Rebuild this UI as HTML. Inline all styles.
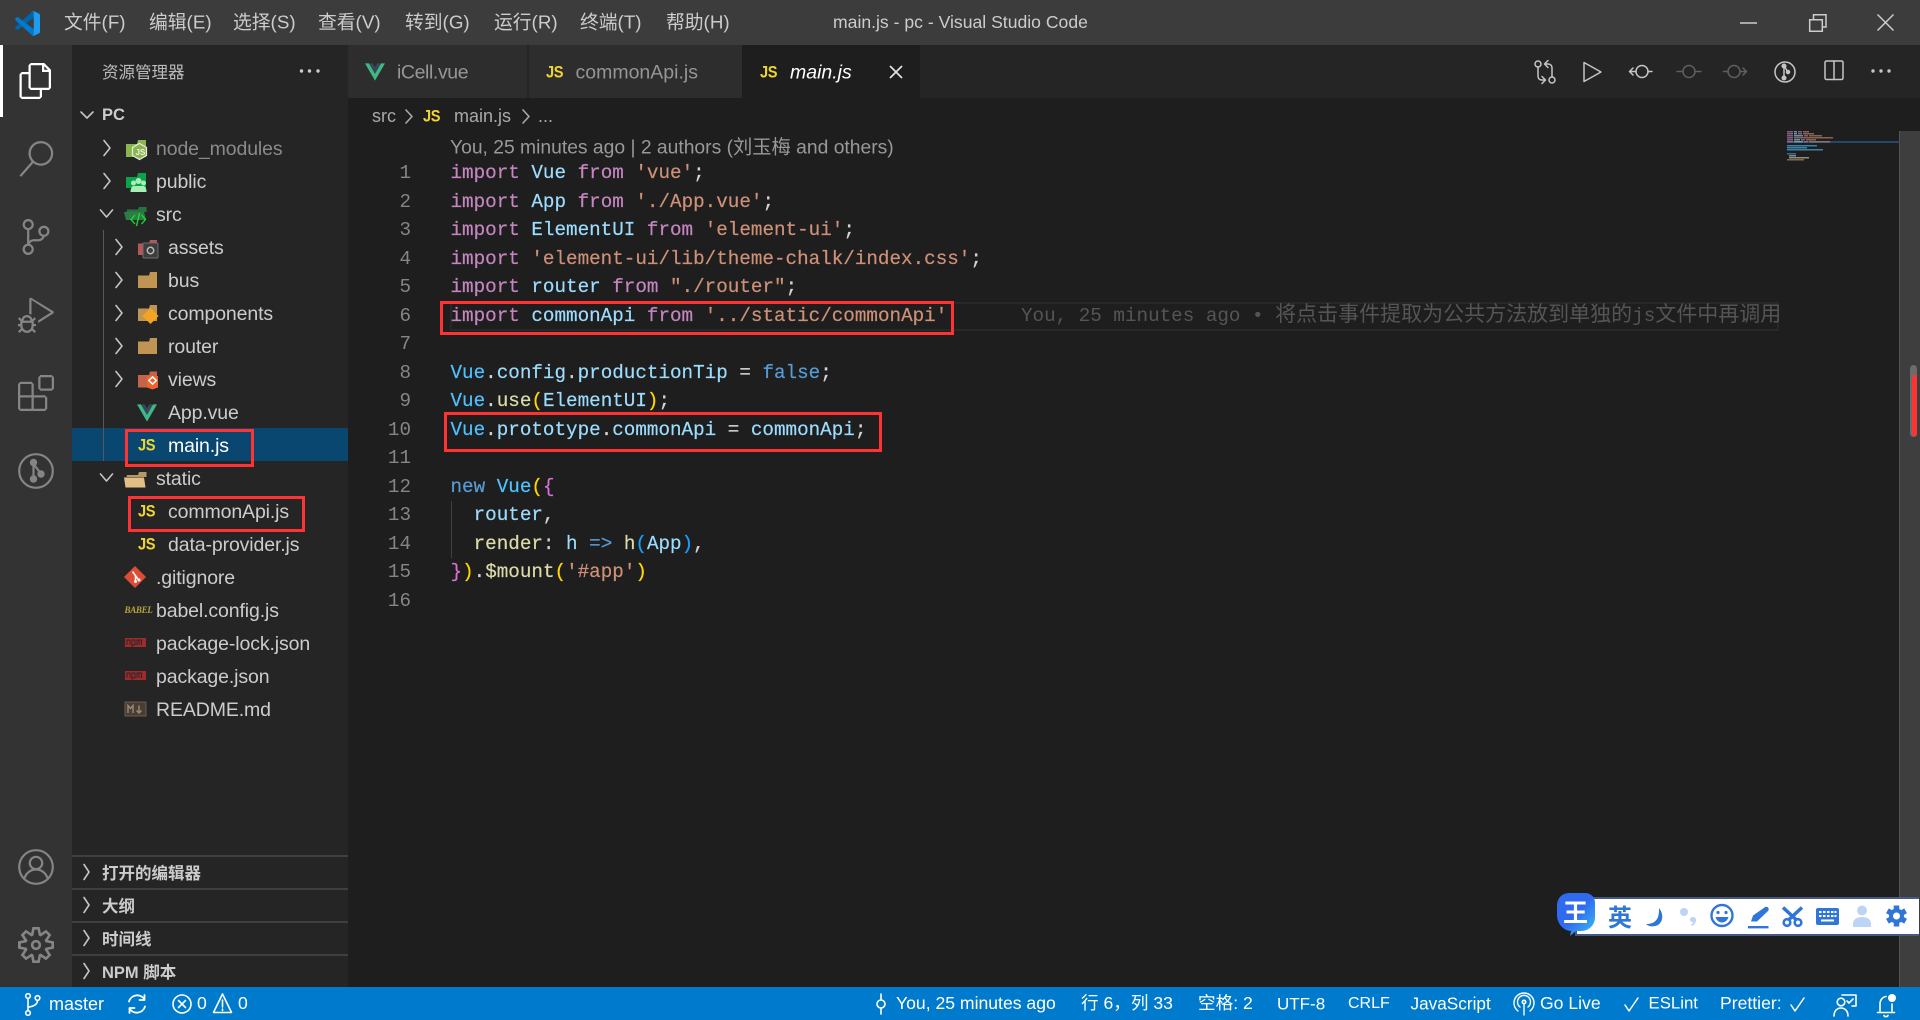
<!DOCTYPE html>
<html lang="zh"><head><meta charset="utf-8"><title>main.js - pc - Visual Studio Code</title>
<style>
html,body{margin:0;padding:0;background:#1e1e1e;width:1920px;height:1020px;overflow:hidden}
body{position:relative;font-family:"Liberation Sans","Noto Sans CJK SC",sans-serif;color:#ccc}
.b{position:absolute}
.t{position:absolute;white-space:nowrap;line-height:1;transform:translateY(-50%)}
svg{position:absolute;overflow:visible}
.m{font-size:18.8px;color:#ccc;top:23px}
.r{position:absolute;white-space:nowrap;font-size:19.5px;letter-spacing:-.12px;line-height:33px;height:33px;color:#ccc}
.c{position:absolute;left:450.5px;white-space:pre;font-family:"Liberation Mono","Noto Sans CJK SC",monospace;font-size:19.25px;line-height:28.5px;height:28.5px;color:#d4d4d4;-webkit-text-stroke:.2px}
.n{position:absolute;width:60px;left:351px;text-align:right;font-family:"Liberation Mono",monospace;font-size:19.25px;line-height:28.5px;color:#858585}
.k{color:#c586c0}.v{color:#9cdcfe}.u{color:#4fc1ff}.s{color:#ce9178}.w{color:#569cd6}.f{color:#dcdcaa}.g{color:#ffd700}.p{color:#da70d6}.q{color:#179fff}
.st{font-size:17.6px;color:#fff;top:1004px}
.h{font-size:16.5px;font-weight:bold;color:#ccc;left:102px}
.js{position:absolute;font:bold 17px/1 "Liberation Sans",sans-serif;letter-spacing:-.4px;color:#f0d62e;transform:translateY(-50%) scaleX(.86);transform-origin:left center}
.sec{position:absolute;left:72px;width:276px;height:2px;background:#3f3f3f}
.red{position:absolute;border:3px solid #f33;box-sizing:border-box}
.ch{fill:none;stroke:#c5c5c5;stroke-width:1.6;stroke-linecap:round;stroke-linejoin:round}
.ic{fill:none;stroke:#fff;stroke-width:1.6;stroke-linecap:round;stroke-linejoin:round}
.tb{fill:none;stroke:#c5c5c5;stroke-width:1.5;stroke-linecap:round;stroke-linejoin:round}
.dim{stroke:#5f5f5f}
.bl{fill:#2f76d8}
</style></head><body>

<!-- title bar -->
<div class="b" style="left:0;top:0;width:1920px;height:45px;background:#3c3c3c"></div>
<svg style="left:15px;top:11px" width="25" height="25" viewBox="0 0 100 100"><path fill="#0065A9" d="M96.5 10.8 75.9.9a6.2 6.2 0 0 0-7.1 1.2L1.4 63.5a4.2 4.2 0 0 0 0 6.2l5.5 5a4.2 4.2 0 0 0 5.3.2L93.3 13.4c2.7-2 6.7-.1 6.7 3.3v-.2a6.2 6.2 0 0 0-3.5-5.7Z"/><path fill="#007ACC" d="M96.5 89.2 75.9 99.1a6.2 6.2 0 0 1-7.1-1.2L1.4 36.5a4.2 4.2 0 0 1 0-6.2l5.5-5a4.2 4.2 0 0 1 5.3-.2l81.1 61.5c2.7 2 6.7.1 6.7-3.3v.2a6.2 6.2 0 0 1-3.5 5.7Z"/><path fill="#1F9CF0" d="M75.9 99.1a6.2 6.2 0 0 1-7.1-1.2c2.3 2.3 6.2.7 6.2-2.6V4.7c0-3.3-3.9-4.9-6.2-2.6a6.2 6.2 0 0 1 7.1-1.2l20.6 9.9A6.2 6.2 0 0 1 100 16.4v67.2a6.2 6.2 0 0 1-3.5 5.6L75.9 99.1Z"/></svg>
<span class="t m" style="left:64px">文件(F)</span>
<span class="t m" style="left:149px">编辑(E)</span>
<span class="t m" style="left:233px">选择(S)</span>
<span class="t m" style="left:318px">查看(V)</span>
<span class="t m" style="left:405px">转到(G)</span>
<span class="t m" style="left:494px">运行(R)</span>
<span class="t m" style="left:580px">终端(T)</span>
<span class="t m" style="left:666px">帮助(H)</span>
<span class="t" style="left:833px;top:23px;font-size:17.6px;color:#ccc">main.js - pc - Visual Studio Code</span>
<svg style="left:0;top:0" width="1920" height="45"><g fill="none" stroke="#ccc" stroke-width="1.5"><path d="M1740 23h17"/><path d="M1809.7 19.7h12.6v11.6h-12.6z"/><path d="M1813.5 19V14.7h12.5V27h-3.5"/><path d="M1877.5 14.5l16 16M1893.5 14.5l-16 16"/></g></svg>

<!-- activity bar -->
<div class="b" style="left:0;top:45px;width:72px;height:942px;background:#333"></div>
<div class="b" style="left:0;top:45px;width:3px;height:72px;background:#fff"></div>
<svg style="left:18px;top:63px" width="36" height="36" viewBox="0 0 24 24" fill="#fff"><path d="M17.5 0h-9L7 1.5V6H2.5L1 7.5v15.07L2.5 24h12.07L16 22.57V18h4.7l1.3-1.43V4.5L17.5 0zm0 2.12l2.38 2.38H17.5V2.12zm-3 20.38h-12v-15H7v9.07L8.5 18h6v4.5zm6-6h-12v-15H16V6h4.5v10.5z"/></svg>
<svg style="left:18px;top:141px" width="36" height="36" viewBox="0 0 24 24" fill="#858585"><path d="M15.25 0a8.25 8.25 0 0 0-6.18 13.72L1 22.88l1.12 1 8.05-9.12A8.251 8.251 0 1 0 15.25.01V0zm0 15a6.75 6.75 0 1 1 0-13.5 6.75 6.75 0 0 1 0 13.5z"/></svg>
<svg style="left:18px;top:219px" width="36" height="36" viewBox="0 0 24 24" fill="#858585"><path d="M21.007 8.222A3.738 3.738 0 0 0 15.045 5.2a3.737 3.737 0 0 0 1.156 6.583 2.988 2.988 0 0 1-2.668 1.67h-2.99a4.456 4.456 0 0 0-2.989 1.165V7.4a3.737 3.737 0 1 0-1.494 0v9.117a3.776 3.776 0 1 0 1.816.099 2.99 2.99 0 0 1 2.668-1.667h2.99a4.484 4.484 0 0 0 4.223-3.039 3.736 3.736 0 0 0 3.25-3.687zM4.565 3.738a2.242 2.242 0 1 1 4.484 0 2.242 2.242 0 0 1-4.484 0zm4.484 16.441a2.242 2.242 0 1 1-4.484 0 2.242 2.242 0 0 1 4.484 0zm8.221-9.715a2.242 2.242 0 1 1 0-4.485 2.242 2.242 0 0 1 0 4.485z"/></svg>
<svg style="left:18px;top:297px" width="36" height="36" viewBox="0 0 24 24" fill="#858585"><path d="M10.94 13.5l-1.32 1.32a3.73 3.73 0 0 0-7.24 0L1.06 13.5 0 14.56l1.72 1.72-.22.22V18H0v1.5h1.5v.08c.077.489.214.966.41 1.42L0 22.94 1.06 24l1.65-1.65A4.308 4.308 0 0 0 6 24a4.31 4.31 0 0 0 3.29-1.65L10.94 24 12 22.94 10.09 21c.198-.464.336-.951.41-1.45v-.1H12V18h-1.5v-1.5l-.22-.22L12 14.56l-1.06-1.06zM6 13.5a2.25 2.25 0 0 1 2.25 2.25h-4.5A2.25 2.25 0 0 1 6 13.5zm3 6a3.33 3.33 0 0 1-3 3 3.33 3.33 0 0 1-3-3v-2.25h6v2.25zm14.76-9.9v1.26L13.5 17.37v-1.77l8.45-5.37L9 2v9.75a5.28 5.28 0 0 0-1.5-.45V1.07L8.61.45l15.15 9.15z"/></svg>
<svg style="left:18px;top:375px" width="36" height="36" viewBox="0 0 24 24" fill="#858585"><path d="M13.5 1.5L15 0h7.5L24 1.5V9l-1.5 1.5H15L13.5 9V1.5zm1.5 0V9h7.5V1.5H15zM0 15V6l1.5-1.5H9L10.5 6v7.5H18l1.5 1.5v7.5L18 24H1.5L0 22.5V15zm9-1.5V6H1.5v7.5H9zM9 15H1.5v7.5H9V15zm1.5 7.5H18V15h-7.5v7.5z"/></svg>
<svg style="left:18px;top:453px" width="36" height="36" viewBox="0 0 36 36" fill="none" stroke="#858585" stroke-width="2.2"><circle cx="18" cy="18" r="16.8"/><path d="M15.5 9.5V26M15.5 11L24 22"/><circle cx="15.5" cy="9.5" r="2.6" fill="#858585"/><circle cx="15.5" cy="26" r="2.6" fill="#858585"/><circle cx="23" cy="21" r="2.6" fill="#858585"/></svg>
<svg style="left:18px;top:849px" width="36" height="36" viewBox="0 0 36 36" fill="none" stroke="#858585" stroke-width="2.2"><circle cx="18" cy="18" r="16.8"/><circle cx="18" cy="14" r="6.2"/><path d="M6.5 29c1.8-5 6-8.5 11.5-8.5S27.7 24 29.5 29"/></svg>
<svg style="left:18px;top:927px" width="36" height="36" viewBox="0 0 24 24" fill="#858585"><path d="M19.85 8.75l4.15.83v4.84l-4.15.83 2.35 3.52-3.43 3.43-3.52-2.35-.83 4.15H9.58l-.83-4.15-3.52 2.35-3.43-3.43 2.35-3.52L0 14.42V9.58l4.15-.83L1.8 5.23 5.23 1.8l3.52 2.35L9.58 0h4.84l.83 4.15 3.52-2.35 3.43 3.43-2.35 3.52zm-1.57 5.07l4-.81v-2l-4-.81-.54-1.3 2.29-3.43-1.43-1.43-3.43 2.29-1.3-.54-.81-4h-2l-.81 4-1.3.54-3.43-2.29-1.43 1.43L6.38 8.9l-.54 1.3-4 .81v2l4 .81.54 1.3-2.29 3.43 1.43 1.43 3.43-2.29 1.3.54.81 4h2l.81-4 1.3-.54 3.43 2.29 1.43-1.43-2.29-3.43.54-1.3zm-8.186-4.672A3.43 3.43 0 0 1 12 8.57 3.44 3.44 0 0 1 15.43 12a3.43 3.43 0 1 1-5.336-2.852zm.956 4.274c.281.188.612.288.95.288A1.7 1.7 0 0 0 13.71 12a1.71 1.71 0 1 0-2.66 1.422z"/></svg>

<!-- sidebar -->
<div class="b" style="left:72px;top:45px;width:276px;height:942px;background:#252526"></div>
<span class="t" style="left:102px;top:73px;font-size:16.5px;color:#bbb">资源管理器</span>
<svg style="left:300px;top:69px" width="20" height="4" fill="#ccc"><circle cx="1.5" cy="2" r="1.7"/><circle cx="9.5" cy="2" r="1.7"/><circle cx="18" cy="2" r="1.7"/></svg>
<svg class="ch" style="left:80px;top:110px" width="14" height="10"><path d="M1 2l6 6 6-6"/></svg>
<span class="t" style="left:102px;top:115px;font-size:16.5px;font-weight:bold;color:#ccc">PC</span>
<div class="b" style="left:72px;top:428px;width:276px;height:33px;background:#094771"></div>
<div class="b" style="left:102.5px;top:230px;width:1px;height:231px;background:#585858"></div>

<!-- chevrons and file icons -->
<svg style="left:0;top:0" width="348" height="987"><g class="ch">
<path d="M104 140.5l6 7.5-6 7.5M104 173.5l6 7.5-6 7.5"/>
<path d="M100.5 210l6 7 6-7"/>
<path d="M116 239.5l6 7.5-6 7.5M116 272.5l6 7.5-6 7.5M116 305.5l6 7.5-6 7.5M116 338.5l6 7.5-6 7.5M116 371.5l6 7.5-6 7.5"/>
<path d="M100.5 474l6 7 6-7"/>
<path d="M84 864.5l5 7.5-5 7.5M84 897.5l5 7.5-5 7.5M84 930.5l5 7.5-5 7.5M84 963.5l5 7.5-5 7.5"/>
</g>
<!-- node_modules -->
<path fill="#8ab64e" d="M126 144h11l1-4h8v17h-20z"/><path d="M139.500 143.500l7 4v8l-7 4-7-4v-8z" fill="#8ab64e" stroke="#e8e8e8" stroke-width="1.200"/>
<text x="135.500" y="155" font-size="8" font-weight="bold" fill="#eee" font-family="Liberation Sans">JS</text>
<!-- public -->
<path fill="#0aa24a" d="M126 177h11l1-4h8v15h-20z"/><circle cx="138.500" cy="181" r="3" fill="#a8efb5"/><circle cx="133.500" cy="183" r="2.500" fill="#a8efb5"/><circle cx="143.500" cy="183" r="2.500" fill="#a8efb5"/><path fill="#a8efb5" d="M130.500 192c0-4 1.500-6 3-6h10c1.500 0 3 2 3 6z"/>
<!-- src -->
<path fill="#26733f" d="M127 209.500h11l1-2.500h7.500v5h-20z"/><path fill="#2e7d46" d="M124 212h20l2 8h-20z"/><path d="M135 215l-4 4.500 4 4.500M141.500 215l4 4.500-4 4.500M139.500 213l-3 13" stroke="#1ae034" stroke-width="1.300" fill="none"/>
<!-- assets -->
<path fill="#b5565c" d="M138 243.500h11l1-3.500h7v15h-19z"/><rect x="143" y="243" width="15" height="15" rx="1" fill="#3d3d3d" stroke="#6f6f6f"/><circle cx="150.500" cy="250.500" r="3.200" fill="none" stroke="#bbb" stroke-width="1.500"/>
<!-- bus -->
<path fill="#c09553" d="M138 275.500h11l1-3.500h7v16h-19z"/>
<!-- components -->
<path fill="#c09553" d="M138 308.500h11l1-3.500h7v16h-19z"/><path fill="#f4a423" d="M150.500 308l8 8-8 8-8-8z"/>
<!-- router -->
<path fill="#c09553" d="M138 341.500h11l1-3.500h7v16h-19z"/>
<!-- views -->
<path fill="#c4654a" d="M138 375h11l1-3.500h7v16h-19z"/><path fill="#f1622c" d="M147 376h11v11.500l-5.500 2-5.500-2z"/>
<path d="M148.800 380.500l3.800-3.600 3.800 3.600-3.800 3.600z" fill="none" stroke="#fff" stroke-width="1.500"/>
<!-- static -->
<path fill="#b89766" d="M127 475h11l1-3h7.500v5h-20z"/><path fill="#e3bf85" d="M124 477.500h20l1.500 10h-20z"/>
<!-- gitignore -->
<path fill="#dd4c35" d="M135 566l11 11-11 11-11-11z"/><path d="M132.500 571.500l6.500 9M135.500 575v6.500" stroke="#fff" stroke-width="1.500" fill="none"/><circle cx="135.500" cy="581.500" r="1.500" fill="#fff"/><circle cx="139" cy="580" r="1.500" fill="#fff"/>
<!-- npm -->
<rect x="125" y="638" width="21" height="9" fill="#a32a2a"/><rect x="125" y="671" width="21" height="9" fill="#a32a2a"/>
<path d="M127 645v-5h3v5M132 647v-7h3v5h-3M137 645v-5h2v5M139 640h2.500v5" stroke="#252526" stroke-width="1" fill="none"/>
<path d="M127 678v-5h3v5M132 680v-7h3v5h-3M137 678v-5h2v5M139 673h2.500v5" stroke="#252526" stroke-width="1" fill="none"/>
<!-- md -->
<rect x="125" y="702" width="21" height="14" fill="#4a3e34" stroke="#6d5c4c"/><path d="M128 713v-7.500l2.500 3 2.500-3v7.500M139 705.500v7M136.500 710.500l2.500 2.500 2.500-2.500" stroke="#9a8a78" stroke-width="1.400" fill="none"/>
</svg>
<span class="t" style="left:124.5px;top:610px;font:italic bold 9px 'Liberation Serif',serif;color:#b8a53a;letter-spacing:-.3px">BABEL</span>

<div class="r" style="left:156px;top:133px;color:#8a8a8a">node_modules</div>
<div class="r" style="left:156px;top:166px">public</div>
<div class="r" style="left:156px;top:199px">src</div>
<div class="r" style="left:168px;top:232px">assets</div>
<div class="r" style="left:168px;top:265px">bus</div>
<div class="r" style="left:168px;top:298px">components</div>
<div class="r" style="left:168px;top:331px">router</div>
<div class="r" style="left:168px;top:364px">views</div>
<svg style="left:137px;top:404px" width="20" height="18" viewBox="0 0 256 221"><path fill="#41B883" d="m0 0 128 220.800L256 0h-51.200L128 132.480 50.560 0H0Z"/><path fill="#35495E" d="M50.560 0 128 133.120 204.800 0h-47.360L128 51.200 97.920 0H50.560Z"/></svg>
<div class="r" style="left:168px;top:397px">App.vue</div>
<span class="js" style="left:138px;top:445px">JS</span>
<div class="r" style="left:168px;top:429.5px;color:#fff">main.js</div>
<div class="r" style="left:156px;top:463px">static</div>
<span class="js" style="left:138px;top:511px">JS</span>
<div class="r" style="left:168px;top:496px">commonApi.js</div>
<span class="js" style="left:138px;top:544px">JS</span>
<div class="r" style="left:168px;top:529px">data-provider.js</div>
<div class="r" style="left:156px;top:562px">.gitignore</div>
<div class="r" style="left:156px;top:595px">babel.config.js</div>
<div class="r" style="left:156px;top:628px">package-lock.json</div>
<div class="r" style="left:156px;top:661px">package.json</div>
<div class="r" style="left:156px;top:694px">README.md</div>

<div class="sec" style="top:855px"></div><div class="sec" style="top:888px"></div><div class="sec" style="top:921px"></div><div class="sec" style="top:954px"></div>
<span class="t h" style="top:874px">打开的编辑器</span>
<span class="t h" style="top:907px">大纲</span>
<span class="t h" style="top:940px">时间线</span>
<span class="t h" style="top:973px">NPM 脚本</span>

<!-- tabs -->
<div class="b" style="left:348px;top:45px;width:1572px;height:52.5px;background:#252526"></div>
<div class="b" style="left:348px;top:45px;width:179px;height:52.5px;background:#2d2d2d"></div>
<div class="b" style="left:529px;top:45px;width:213px;height:52.5px;background:#2d2d2d"></div>
<div class="b" style="left:742px;top:45px;width:178px;height:52.5px;background:#1e1e1e"></div>
<svg style="left:365px;top:63px" width="20" height="18" viewBox="0 0 256 221"><path fill="#41B883" d="m0 0 128 220.800L256 0h-51.200L128 132.480 50.560 0H0Z"/><path fill="#35495E" d="M50.560 0 128 133.120 204.800 0h-47.360L128 51.200 97.920 0H50.560Z"/></svg>
<span class="t" style="left:397px;top:73px;font-size:19.5px;letter-spacing:-.4px;color:#969696">iCell.vue</span>
<span class="js" style="left:546px;top:72px">JS</span>
<span class="t" style="left:575.5px;top:73px;font-size:19.5px;color:#969696">commonApi.js</span>
<span class="js" style="left:760px;top:72px">JS</span>
<span class="t" style="left:790px;top:73px;font-size:19.5px;font-style:italic;color:#fff">main.js</span>
<svg style="left:889px;top:65px" width="14" height="14" fill="none" stroke="#e0e0e0" stroke-width="1.800"><path d="M1 1l12 12M13 1L1 13"/></svg>

<!-- toolbar icons -->
<svg style="left:0;top:0" width="1920" height="100"><g class="tb">
<circle cx="1538" cy="64" r="3"/><path d="M1538 67v9c0 2.500 1.500 4 4 4h3M1542 76.500l3.500 3.500-3.500 3.500"/><circle cx="1552" cy="80" r="3"/><path d="M1552 77v-9c0-2.500-1.500-4-4-4h-3M1548 60.500l-3.500 3.500 3.500 3.500"/>
<path d="M1584 62.500l17 9.500-17 9.500z"/>
<circle cx="1642" cy="71.500" r="6"/><path d="M1648 71.500h4M1636 71.500h-6.500M1633 68l-3.500 3.500 3.500 3.500"/>
</g><g class="tb dim">
<circle cx="1689" cy="71.500" r="6"/><path d="M1695 71.500h6M1683 71.500h-6"/>
<circle cx="1734" cy="71.500" r="6"/><path d="M1728 71.500h-4.500M1740 71.500h6.500M1743 68l3.500 3.500-3.500 3.500"/>
</g><g class="tb">
<circle cx="1785" cy="72" r="10"/><path d="M1784 66v12M1784 66l4 6"/><circle cx="1784" cy="66" r="1.800" fill="#c5c5c5"/><circle cx="1784" cy="78" r="1.800" fill="#c5c5c5"/><circle cx="1788" cy="72" r="1.500" fill="#c5c5c5"/>
<rect x="1825" y="61" width="18" height="18.500" rx="1.500"/><path d="M1834 61v18.500"/>
</g><g fill="#c5c5c5"><circle cx="1873" cy="71" r="1.700"/><circle cx="1881" cy="71" r="1.700"/><circle cx="1889" cy="71" r="1.700"/></g></svg>

<!-- breadcrumb -->
<span class="t" style="left:372px;top:116px;font-size:18px;color:#a9a9a9">src</span>
<svg class="ch" style="left:405px;top:109px;stroke:#a9a9a9" width="9" height="15"><path d="M1 1l6 6.500-6 6.500"/></svg>
<span class="js" style="left:423px;top:116px">JS</span>
<span class="t" style="left:454px;top:116px;font-size:18px;color:#a9a9a9">main.js</span>
<svg class="ch" style="left:522px;top:109px;stroke:#a9a9a9" width="9" height="15"><path d="M1 1l6 6.500-6 6.500"/></svg>
<span class="t" style="left:538px;top:116px;font-size:18px;color:#a9a9a9">...</span>

<!-- overview ruler / scrollbar -->
<div class="b" style="left:1899px;top:131px;width:21px;height:856px;background:#3e3e3e"></div>
<div class="b" style="left:1909.5px;top:365px;width:7px;height:72px;background:#6b6b6b;border-radius:3.5px"></div>
<div class="b" style="left:1912px;top:375px;width:5px;height:61px;background:#f33;border-radius:2px"></div>
<div class="b" style="left:1899px;top:131px;width:1px;height:856px;background:#555"></div>

<!-- minimap -->
<svg style="left:1787px;top:131px" width="113" height="32">
<rect x="0" y="10" width="113" height="2" fill="#264f78" opacity=".85"/>
<g opacity=".6">
<rect x="0" y="0" width="6" height="1.500" fill="#c586c0"/><rect x="7" y="0" width="3" height="1.500" fill="#9cdcfe"/><rect x="11" y="0" width="4" height="1.500" fill="#c586c0"/><rect x="16" y="0" width="6" height="1.500" fill="#ce9178"/>
<rect x="0" y="2" width="6" height="1.500" fill="#c586c0"/><rect x="7" y="2" width="3" height="1.500" fill="#9cdcfe"/><rect x="11" y="2" width="4" height="1.500" fill="#c586c0"/><rect x="16" y="2" width="11" height="1.500" fill="#ce9178"/>
<rect x="0" y="4" width="6" height="1.500" fill="#c586c0"/><rect x="7" y="4" width="9" height="1.500" fill="#9cdcfe"/><rect x="17" y="4" width="4" height="1.500" fill="#c586c0"/><rect x="22" y="4" width="13" height="1.500" fill="#ce9178"/>
<rect x="0" y="6" width="6" height="1.500" fill="#c586c0"/><rect x="7" y="6" width="39" height="1.500" fill="#ce9178"/>
<rect x="0" y="8" width="6" height="1.500" fill="#c586c0"/><rect x="7" y="8" width="6" height="1.500" fill="#9cdcfe"/><rect x="14" y="8" width="4" height="1.500" fill="#c586c0"/><rect x="19" y="8" width="10" height="1.500" fill="#ce9178"/>
<rect x="0" y="10" width="6" height="1.500" fill="#c586c0"/><rect x="7" y="10" width="9" height="1.500" fill="#9cdcfe"/><rect x="17" y="10" width="4" height="1.500" fill="#c586c0"/><rect x="22" y="10" width="21" height="1.500" fill="#ce9178"/>
<rect x="0" y="14" width="30" height="1.500" fill="#4fc1ff"/>
<rect x="0" y="16" width="20" height="1.500" fill="#4fc1ff"/>
<rect x="0" y="18" width="36" height="1.500" fill="#4fc1ff"/>
<rect x="0" y="22" width="9" height="1.500" fill="#569cd6"/>
<rect x="2" y="24" width="7" height="1.500" fill="#9cdcfe"/>
<rect x="2" y="26" width="20" height="1.500" fill="#dcdcaa"/>
<rect x="0" y="28" width="17" height="1.500" fill="#ce9178"/>
</g></svg>

<!-- current line highlight -->
<div class="b" style="left:450px;top:302px;width:1329px;height:28.5px;border:2px solid #282828;box-sizing:border-box"></div>
<div class="b" style="left:451px;top:501px;width:1px;height:57px;background:#404040"></div>

<!-- code lens -->
<span class="t" style="left:450px;top:148px;font-size:19.3px;color:#999">You, 25 minutes ago | 2 authors (刘玉梅 and others)</span>

<!-- line numbers -->
<div class="n" style="top:159px">1</div><div class="n" style="top:187.5px">2</div><div class="n" style="top:216px">3</div><div class="n" style="top:244.5px">4</div><div class="n" style="top:273px">5</div><div class="n" style="top:301.5px">6</div><div class="n" style="top:330px">7</div><div class="n" style="top:358.5px">8</div><div class="n" style="top:387px">9</div><div class="n" style="top:415.5px">10</div><div class="n" style="top:444px">11</div><div class="n" style="top:472.5px">12</div><div class="n" style="top:501px">13</div><div class="n" style="top:529.5px">14</div><div class="n" style="top:558px">15</div><div class="n" style="top:586.5px">16</div>

<!-- code -->
<div class="c" style="top:159px"><span class="k">import</span> <span class="v">Vue</span> <span class="k">from</span> <span class="s">'vue'</span>;</div>
<div class="c" style="top:187.5px"><span class="k">import</span> <span class="v">App</span> <span class="k">from</span> <span class="s">'./App.vue'</span>;</div>
<div class="c" style="top:216px"><span class="k">import</span> <span class="v">ElementUI</span> <span class="k">from</span> <span class="s">'element-ui'</span>;</div>
<div class="c" style="top:244.5px"><span class="k">import</span> <span class="s">'element-ui/lib/theme-chalk/index.css'</span>;</div>
<div class="c" style="top:273px"><span class="k">import</span> <span class="v">router</span> <span class="k">from</span> <span class="s">"./router"</span>;</div>
<div class="c" style="top:301.5px"><span class="k">import</span> <span class="v">commonApi</span> <span class="k">from</span> <span class="s">'../static/commonApi'</span></div>
<div class="c" style="top:301.5px;left:1021px;color:#555;-webkit-text-stroke:0">You, 25 minutes ago • <span style="font-size:21px;font-family:'Noto Sans CJK SC',sans-serif;line-height:20px">将点击事件提取为公共方法放到单独的</span>js<span style="font-size:21px;font-family:'Noto Sans CJK SC',sans-serif;line-height:20px">文件中再调用</span></div>
<div class="c" style="top:358.5px"><span class="u">Vue</span>.<span class="v">config</span>.<span class="v">productionTip</span> = <span class="w">false</span>;</div>
<div class="c" style="top:387px"><span class="u">Vue</span>.<span class="f">use</span><span class="g">(</span><span class="v">ElementUI</span><span class="g">)</span>;</div>
<div class="c" style="top:415.5px"><span class="u">Vue</span>.<span class="v">prototype</span>.<span class="v">commonApi</span> = <span class="v">commonApi</span>;</div>
<div class="c" style="top:472.5px"><span class="w">new</span> <span class="u">Vue</span><span class="g">(</span><span class="p">{</span></div>
<div class="c" style="top:501px">  <span class="v">router</span>,</div>
<div class="c" style="top:529.5px">  <span class="f">render</span>: <span class="v">h</span> <span class="w">=&gt;</span> <span class="f">h</span><span class="q">(</span><span class="v">App</span><span class="q">)</span>,</div>
<div class="c" style="top:558px"><span class="p">}</span><span class="g">)</span>.<span class="f">$mount</span><span class="g">(</span><span class="s">'#app'</span><span class="g">)</span></div>

<!-- red annotation boxes -->
<div class="red" style="left:440px;top:300.5px;width:514px;height:34.5px"></div>
<div class="red" style="left:444px;top:412px;width:438px;height:40px"></div>
<div class="red" style="left:125px;top:429px;width:129px;height:38px"></div>
<div class="red" style="left:128px;top:496px;width:177px;height:36px"></div>

<!-- IME bar -->
<div class="b" style="left:1575px;top:897px;width:344px;height:39px;background:#fff;border:2px solid #46597f;border-right:none;box-sizing:border-box"></div>
<svg style="left:1556px;top:892px" width="40" height="47" viewBox="0 0 40 47"><defs><linearGradient id="gb" x1="0" y1="0" x2="1" y2="1"><stop offset=".5" stop-color="#2f6af0"/><stop offset="1" stop-color="#39c3f5"/></linearGradient></defs><path fill="url(#gb)" d="M14 1h15c6 0 10 4 10 10v14c0 8-6 14-14 14h-5l-6 5 1-5C8 39 1 32 1 23V14C1 6 6 1 14 1z"/></svg>
<span class="t" style="left:1563px;top:912px;font:bold 25px/1 'Noto Sans CJK SC',sans-serif;color:#fff">王</span>
<span class="t" style="left:1608px;top:916px;font:bold 24px/1 'Noto Sans CJK SC',sans-serif;color:#2f76d8">英</span>
<svg style="left:1640px;top:900px" width="280" height="34" class="bl">
<path d="M19 8c5 6 4 14-1 17-4 2-9 2-12-1 6 0 10-2 12-7 1-3 1-6 1-9z"/>
<circle cx="44" cy="12" r="4" fill="#bcd4f5"/><path d="M53 17c2 0 3 1 3 3 0 3-2 5-4 6l-1-1c1-1 2-2 2-3-2 0-3-1-3-2.500s1.500-2.500 3-2.500z" fill="#bcd4f5"/>
<circle cx="82" cy="15.500" r="10.500" fill="none" stroke="#2f76d8" stroke-width="2.400"/><circle cx="78" cy="12.500" r="1.600"/><circle cx="86" cy="12.500" r="1.600"/><path d="M75.500 17c1 3.500 3.500 5.500 6.500 5.500s5.500-2 6.500-5.500z"/>
<path d="M111 21.500l2-6 11.500-8c1-1 2.500-1 3.500 0s1 2.500 0 3.500l-11 10.500z"/><rect x="108" y="26" width="20.500" height="2.400"/>
<circle cx="147" cy="22.500" r="3.300" fill="none" stroke="#2f76d8" stroke-width="2.600"/><circle cx="158" cy="22.500" r="3.300" fill="none" stroke="#2f76d8" stroke-width="2.600"/><path d="M149 19.500l13-12M156 19.500l-13-12" stroke="#2f76d8" stroke-width="3.500" fill="none"/>
<rect x="176" y="8" width="23" height="17" rx="2"/><g fill="#fff"><rect x="179" y="11" width="2.500" height="2"/><rect x="183" y="11" width="2.500" height="2"/><rect x="187" y="11" width="2.500" height="2"/><rect x="191" y="11" width="2.500" height="2"/><rect x="194.500" y="11" width="2" height="2"/><rect x="179" y="15" width="2.500" height="2"/><rect x="183" y="15" width="2.500" height="2"/><rect x="187" y="15" width="2.500" height="2"/><rect x="191" y="15" width="2.500" height="2"/><rect x="194.500" y="15" width="2" height="2"/><rect x="181" y="19.500" width="13" height="2"/></g>
<circle cx="222" cy="10.500" r="5" fill="#bcd4f5"/><path d="M213 27v-3c0-5 4-7 9-7s9 2 9 7v3z" fill="#bcd4f5"/>
<g stroke="#2f76d8" stroke-width="5.500"><path d="M256.500 5.500v21M247.400 10.750l18.200 10.500M247.400 21.250l18.200-10.500"/></g><circle cx="256.500" cy="16" r="7.500"/><circle cx="256.500" cy="16" r="3.500" fill="#fff"/>
</svg>

<!-- status bar -->
<div class="b" style="left:0;top:987px;width:1920px;height:33px;background:#007acc"></div>
<svg style="left:0;top:987px" width="1920" height="33"><g class="ic">
<circle cx="28" cy="9" r="2.300"/><circle cx="28" cy="26" r="2.300"/><circle cx="37.500" cy="11" r="2.300"/><path d="M28 11.300v12.400M37.500 13.300c0 4-3 5.700-9.500 7"/>
<path d="M129 14.500a8.500 8.500 0 0 1 15.500-2M145 19.500a8.500 8.500 0 0 1-15.500 2M144.500 8v5h-5M129.500 26v-5h5" stroke-width="1.800"/>
<circle cx="182" cy="17" r="9"/><path d="M178.500 13.500l7 7M185.500 13.500l-7 7"/>
<path d="M222.500 7l9 18.500h-18z"/><path d="M222.500 13v7M222.500 22v1.500"/>
<circle cx="881" cy="17" r="4"/><path d="M881 7v6M881 21v6"/>
<circle cx="1524" cy="15" r="1.700"/><path d="M1524 17v11M1520 20a6.500 6.500 0 1 1 8 0M1518 24a10 10 0 1 1 12 0" stroke-width="1.400"/>
<path d="M1625 18l4 6 9-13M1791 18l4 6 9-13" stroke-width="1.500"/>
<path d="M1842 8h14v11h-4"/><circle cx="1841" cy="15" r="3.800"/><path d="M1834 29c0-5 3-8 7-8s7 3 7 8"/><path d="M1847 14l2 2 4-4"/>
<path d="M1880 24v-7c0-4 2.500-7 6-7.500M1892 17v7M1877.500 25.500h17M1884 28.500c.5 1.500 3.500 1.500 4 0"/>
</g><circle cx="1892" cy="11" r="4" fill="#fff"/></svg>
<span class="t st" style="left:49px;font-size:18px">master</span>
<span class="t st" style="left:197px">0</span>
<span class="t st" style="left:238px">0</span>
<span class="t st" style="left:896px">You, 25 minutes ago</span>
<span class="t st" style="left:1081px">行 6，列 33</span>
<span class="t st" style="left:1198px">空格: 2</span>
<span class="t st" style="left:1277px;font-size:17px">UTF-8</span>
<span class="t st" style="left:1348px;font-size:16px">CRLF</span>
<span class="t st" style="left:1410.5px;font-size:17.2px">JavaScript</span>
<span class="t st" style="left:1540px">Go Live</span>
<span class="t st" style="left:1648.5px;font-size:16.8px">ESLint</span>
<span class="t st" style="left:1720px">Prettier:</span>
</body></html>
